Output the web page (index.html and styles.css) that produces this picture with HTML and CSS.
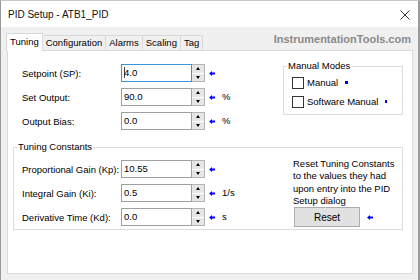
FILE: index.html
```html
<!DOCTYPE html>
<html lang="en">
<head>
    <meta charset="UTF-8">
    <title>PID Setup - ATB1_PID</title>
    <link rel="stylesheet" href="styles.css">
</head>
<body>
    <div class="window">
        <div class="titlebar">
            <span class="title">PID Setup - ATB1_PID</span>
            <svg class="close" width="10" height="10" viewBox="0 0 10 10">
                <path d="M0.5 0.5 L9.5 9.5 M9.5 0.5 L0.5 9.5" stroke="#333" stroke-width="1" fill="none"/>
            </svg>
        </div>
        <div class="client">
            <div class="tabs">
                <div class="tab active">Tuning</div>
                <div class="tab">Configuration</div>
                <div class="tab">Alarms</div>
                <div class="tab">Scaling</div>
                <div class="tab">Tag</div>
                <div class="watermark">InstrumentationTools.com</div>
            </div>
            <div class="panel">
                <div class="top">
                    <div class="fields">
                        <span class="label">Setpoint (SP):</span>
                        <div class="input focused"><span class="caret"></span>4.0</div>
                        <div class="spin"><span class="up"></span><span class="down"></span></div>
                        <span class="marker"><svg width="6" height="5" viewBox="0 0 6 5"><path d="M0 2.5 L3 0 L3 1.5 L6 1.5 L6 3.5 L3 3.5 L3 5 Z" fill="#0000ff"/></svg></span>
                        <span class="unit"></span>

                        <span class="label">Set Output:</span>
                        <div class="input">90.0</div>
                        <div class="spin"><span class="up"></span><span class="down"></span></div>
                        <span class="marker"><svg width="6" height="5" viewBox="0 0 6 5"><path d="M0 2.5 L3 0 L3 1.5 L6 1.5 L6 3.5 L3 3.5 L3 5 Z" fill="#0000ff"/></svg></span>
                        <span class="unit">%</span>

                        <span class="label">Output Bias:</span>
                        <div class="input">0.0</div>
                        <div class="spin"><span class="up"></span><span class="down"></span></div>
                        <span class="marker"><svg width="6" height="5" viewBox="0 0 6 5"><path d="M0 2.5 L3 0 L3 1.5 L6 1.5 L6 3.5 L3 3.5 L3 5 Z" fill="#0000ff"/></svg></span>
                        <span class="unit">%</span>
                    </div>
                    <fieldset class="group modes">
                        <legend>Manual Modes</legend>
                        <div class="check"><span class="box"></span>Manual<span class="dot"></span></div>
                        <div class="check"><span class="box"></span>Software Manual<span class="dot small"></span></div>
                    </fieldset>
                </div>
                <fieldset class="group tuning">
                    <legend>Tuning Constants</legend>
                    <div class="group-body">
                        <div class="fields">
                            <span class="label">Proportional Gain (Kp):</span>
                            <div class="input">10.55</div>
                            <div class="spin"><span class="up"></span><span class="down"></span></div>
                            <span class="marker"><svg width="6" height="5" viewBox="0 0 6 5"><path d="M0 2.5 L3 0 L3 1.5 L6 1.5 L6 3.5 L3 3.5 L3 5 Z" fill="#0000ff"/></svg></span>
                            <span class="unit"></span>

                            <span class="label">Integral Gain (Ki):</span>
                            <div class="input">0.5</div>
                            <div class="spin"><span class="up"></span><span class="down"></span></div>
                            <span class="marker"><svg width="6" height="5" viewBox="0 0 6 5"><path d="M0 2.5 L3 0 L3 1.5 L6 1.5 L6 3.5 L3 3.5 L3 5 Z" fill="#0000ff"/></svg></span>
                            <span class="unit">1/s</span>

                            <span class="label">Derivative Time (Kd):</span>
                            <div class="input">0.0</div>
                            <div class="spin"><span class="up"></span><span class="down"></span></div>
                            <span class="marker"><svg width="6" height="5" viewBox="0 0 6 5"><path d="M0 2.5 L3 0 L3 1.5 L6 1.5 L6 3.5 L3 3.5 L3 5 Z" fill="#0000ff"/></svg></span>
                            <span class="unit">s</span>
                        </div>
                        <div class="reset-col">
                            <p class="reset-text">Reset Tuning Constants<br>to the values they had<br>upon entry into the PID<br>Setup dialog</p>
                            <div class="reset-row">
                                <button class="button">Reset</button>
                                <span class="marker"><svg width="6" height="5" viewBox="0 0 6 5"><path d="M0 2.5 L3 0 L3 1.5 L6 1.5 L6 3.5 L3 3.5 L3 5 Z" fill="#0000ff"/></svg></span>
                            </div>
                        </div>
                    </div>
                </fieldset>
            </div>
        </div>
    </div>
</body>
</html>
```

FILE: styles.css
```css
* {
    box-sizing: border-box;
}
body {
    margin: 0;
    font-family: "Liberation Sans", Arial, sans-serif;
    font-size: 9.5px;
    color: #000;
    background: #f0f0f0;
}
.window {
    width: 420px;
    height: 280px;
    display: flex;
    flex-direction: column;
    border-top: 1px solid #c8c8c8;
    border-left: 1px solid #9a9a9a;
    border-right: 2px solid #9a9a9a;
    background: #f0f0f0;
}
.titlebar {
    height: 26px;
    background: #fff;
    display: flex;
    align-items: center;
    justify-content: space-between;
    padding: 1px 8px 0 7px;
}
.title {
    font-size: 10px;
    color: #111;
}
.client {
    flex: 1;
    display: flex;
    flex-direction: column;
    padding: 6px 5px 6px 6px;
}
.tabs {
    height: 17px;
    display: flex;
    align-items: flex-end;
}
.tab {
    height: 15px;
    line-height: 14px;
    padding: 0 3px;
    border: 1px solid #d9d9d9;
    border-bottom: none;
    margin-left: -1px;
    background: #f0f0f0;
    white-space: nowrap;
}
.tab.active {
    height: 18px;
    line-height: 16px;
    margin-bottom: -1px;
    background: #fff;
    position: relative;
    z-index: 1;
}
.watermark {
    margin-left: auto;
    margin-right: 2px;
    align-self: flex-start;
    line-height: 13px;
    font-size: 11px;
    font-weight: bold;
    color: #8a8a8a;
}
.panel {
    flex: 1;
    background: #fff;
    border: 1px solid #d9d9d9;
}
.top {
    display: flex;
    align-items: flex-start;
    padding-top: 10px;
}
.top > .fields {
    margin-left: 14px;
}
.fields {
    display: grid;
    grid-template-columns: 99px 71px 13px 17px 24px;
    grid-auto-rows: 24px;
    align-items: center;
}
.input {
    height: 18px;
    line-height: 16px;
    padding-left: 2px;
    border: 1px solid #a0a0a0;
    background: #fff;
}
.input.focused {
    border-color: #3c95dc;
}
.caret {
    display: inline-block;
    width: 1px;
    height: 11px;
    margin-right: -1px;
    background: #444;
    vertical-align: -2px;
}
.spin {
    height: 18px;
    display: flex;
    flex-direction: column;
    border: 1px solid #b4b4b4;
    border-left: none;
    background: #e6e6e6;
}
.spin .up,
.spin .down {
    flex: 1;
    display: flex;
    align-items: center;
    justify-content: center;
}
.spin .up {
    border-bottom: 1px solid #fff;
}
.spin .up::before,
.spin .down::before {
    content: "";
    width: 0;
    height: 0;
    border-left: 2.5px solid transparent;
    border-right: 2.5px solid transparent;
}
.spin .up::before {
    border-bottom: 3px solid #000;
}
.spin .down::before {
    border-top: 3px solid #000;
}
.marker {
    display: flex;
    align-items: center;
    padding-left: 4px;
}
.unit {
    line-height: 12px;
}
.group {
    margin: 0;
    border: 1px solid #dcdcdc;
    min-inline-size: 0;
}
.group legend {
    padding: 0 1px;
    line-height: 12px;
}
.modes {
    width: 120px;
    margin: -1px 9px 0 auto;
    padding: 1px 0 3px 3px;
}
.check {
    height: 19px;
    display: flex;
    align-items: center;
    margin-left: 5px;
}
.box {
    width: 12px;
    height: 12px;
    margin-right: 3px;
    border: 1px solid #333;
    background: #fff;
}
.dot {
    width: 3px;
    height: 3px;
    margin-left: 7px;
    background: #0000ff;
}
.dot.small {
    width: 2px;
}
.tuning {
    margin: 8px 9px 0 5px;
    padding: 4px 0 0 3px;
}
.group-body {
    display: flex;
}
.group-body .fields {
    margin-left: 5px;
}
.reset-col {
    width: 109px;
    margin-left: auto;
    padding-top: 1px;
}
.reset-text {
    margin: 0;
    line-height: 12.3px;
}
.reset-row {
    display: flex;
    align-items: center;
}
.button {
    width: 66px;
    height: 20px;
    margin-left: 1px;
    padding: 0;
    font-family: "Liberation Sans", Arial, sans-serif;
    font-size: 10px;
    color: #000;
    background: #e1e1e1;
    border: 1px solid #adadad;
}
.reset-row .marker {
    padding-left: 7px;
}
```
